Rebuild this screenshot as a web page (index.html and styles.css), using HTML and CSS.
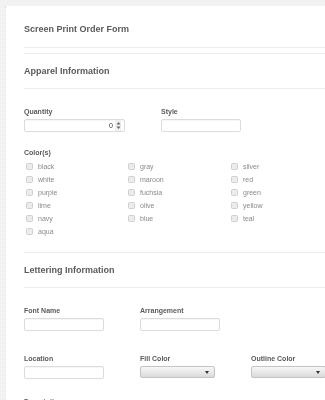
FILE: index.html
```html
<!DOCTYPE html>
<html>
<head>
<meta charset="utf-8">
<link rel="stylesheet" href="styles.css">
</head>
<body>
<div class="card">
  <div class="title">Screen Print Order Form</div>

  <div class="head">Apparel Information</div>
  <div class="row row-apparel">
    <div class="field f-qty">
      <div class="label">Quantity</div>
      <div class="input num"><span class="val">0</span><span class="spin"><svg width="5" height="9" viewBox="0 0 5 9"><path d="M2.5 1 L4.5 3.5 L0.5 3.5 Z M2.5 8 L4.5 5.5 L0.5 5.5 Z" fill="#666"/></svg></span></div>
    </div>
    <div class="field f-80">
      <div class="label">Style</div>
      <div class="input"></div>
    </div>
  </div>

  <div class="colors">
    <div class="label">Color(s)</div>
    <div class="checks">
      <div class="chk"><span class="box"></span>black</div>
      <div class="chk"><span class="box"></span>gray</div>
      <div class="chk"><span class="box"></span>silver</div>
      <div class="chk"><span class="box"></span>white</div>
      <div class="chk"><span class="box"></span>maroon</div>
      <div class="chk"><span class="box"></span>red</div>
      <div class="chk"><span class="box"></span>purple</div>
      <div class="chk"><span class="box"></span>fuchsia</div>
      <div class="chk"><span class="box"></span>green</div>
      <div class="chk"><span class="box"></span>lime</div>
      <div class="chk"><span class="box"></span>olive</div>
      <div class="chk"><span class="box"></span>yellow</div>
      <div class="chk"><span class="box"></span>navy</div>
      <div class="chk"><span class="box"></span>blue</div>
      <div class="chk"><span class="box"></span>teal</div>
      <div class="chk"><span class="box"></span>aqua</div>
    </div>
  </div>

  <div class="head">Lettering Information</div>
  <div class="row row-font">
    <div class="field f-80">
      <div class="label">Font Name</div>
      <div class="input"></div>
    </div>
    <div class="field f-80">
      <div class="label">Arrangement</div>
      <div class="input"></div>
    </div>
  </div>
  <div class="row row-loc">
    <div class="field f-80">
      <div class="label">Location</div>
      <div class="input"></div>
    </div>
    <div class="field f-75">
      <div class="label">Fill Color</div>
      <div class="select"><span class="arrow"></span></div>
    </div>
    <div class="field f-75">
      <div class="label">Outline Color</div>
      <div class="select"><span class="arrow"></span></div>
    </div>
  </div>
  <div class="row row-desc">
    <div class="field">
      <div class="label">Description</div>
    </div>
  </div>
</div>
</body>
</html>
```

FILE: styles.css
```css
html, body {
  margin: 0;
  padding: 0;
}
body {
  background: #f2f2f2;
  overflow: hidden;
  width: 325px;
  height: 400px;
  font-family: "Liberation Sans", Arial, sans-serif;
  -webkit-font-smoothing: antialiased;
  filter: grayscale(1);
}
.card {
  margin: 6px 0 0 5px;
  width: 420px;
  height: 500px;
  background: #fff;
  border-left: 1px dotted #dcdcdc;
  padding-left: 18px;
  box-sizing: border-box;
}
.title {
  font-size: 9px;
  font-weight: bold;
  color: #5a5a5a;
  line-height: 11px;
  padding-top: 18px;
  height: 23px;
  border-bottom: 1px solid #ececec;
}
.head {
  font-size: 9px;
  font-weight: bold;
  color: #5a5a5a;
  line-height: 11px;
  padding-top: 12px;
  height: 22px;
  border-top: 1px solid #ececec;
  border-bottom: 1px solid #ececec;
  margin-top: 5px;
}
.row {
  display: flex;
  gap: 36px;
}
.row-apparel { padding-top: 18px; }
.row-font { padding-top: 18px; }
.row-loc { padding-top: 23px; }
.row-desc { padding-top: 18px; }
.field { flex: none; }
.f-qty { width: 101px; }
.f-80 { width: 80px; }
.f-75 { width: 75px; }
.label {
  font-size: 7px;
  font-weight: bold;
  color: #5a5a5a;
  line-height: 9px;
  margin-bottom: 3px;
  white-space: nowrap;
}
.input {
  height: 13px;
  box-sizing: border-box;
  border: 1px solid #dcdcdc;
  border-radius: 2px;
  box-shadow: inset 0 1px 1px rgba(0,0,0,0.04);
  background: #fff;
}
.num {
  display: flex;
  justify-content: flex-end;
  align-items: center;
}
.val {
  font-size: 7px;
  color: #333;
  line-height: 9px;
  margin-right: 2px;
}
.spin {
  width: 6px;
  height: 11px;
  background: #f0f0f0;
  display: flex;
  align-items: center;
  justify-content: center;
  margin-right: 3px;
}
.spin svg { display: block; }
.colors {
  padding-top: 16px;
}
.checks {
  display: grid;
  grid-template-columns: 102px 103px 1fr;
  padding-left: 2px;
}
.chk {
  height: 13px;
  display: flex;
  align-items: center;
  font-size: 7px;
  color: #8a8a8a;
}
.box {
  width: 7px;
  height: 7px;
  box-sizing: border-box;
  border: 1px solid #cfcfcf;
  border-radius: 1.5px;
  background: #ececec;
  margin-right: 5px;
  flex: none;
}
.colors + .head { margin-top: 14px; }
.select {
  margin-top: 1px;
  height: 12px;
  box-sizing: border-box;
  border: 1px solid #c4c4c4;
  border-radius: 2px;
  background: linear-gradient(#f7f7f7, #dadada);
  position: relative;
}
.arrow {
  position: absolute;
  right: 5px;
  top: 4px;
  width: 0;
  height: 0;
  border-left: 2px solid transparent;
  border-right: 2px solid transparent;
  border-top: 3px solid #333;
}
```
